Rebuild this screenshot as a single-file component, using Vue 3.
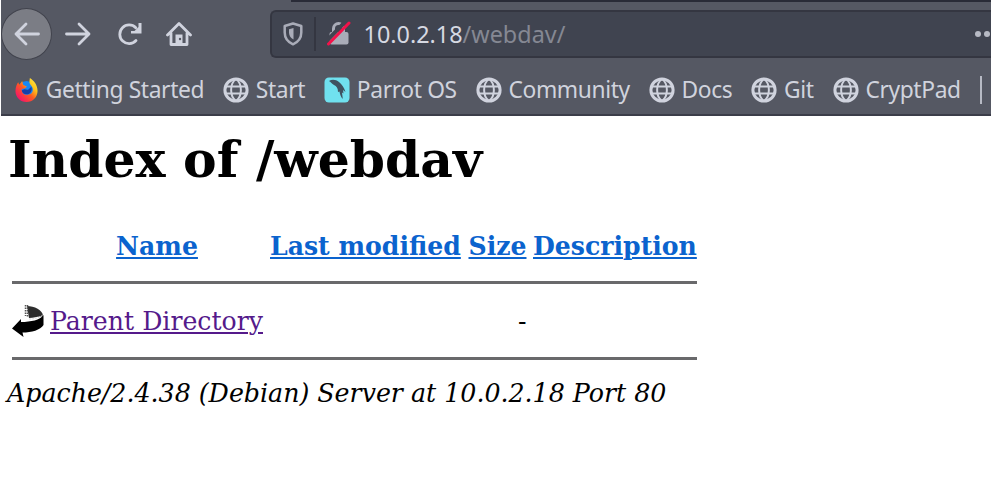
<script setup>
const bookmarks = [
  { label: 'Getting Started', icon: 'firefox' },
  { label: 'Start', icon: 'globe' },
  { label: 'Parrot OS', icon: 'parrot' },
  { label: 'Community', icon: 'globe' },
  { label: 'Docs', icon: 'globe' },
  { label: 'Git', icon: 'globe' },
  { label: 'CryptPad', icon: 'globe' },
]
</script>

<template>
  <div class="window">
    <header class="chrome">
      <div class="tabline"></div>
      <div class="toolbar">
        <button class="back" aria-label="Back">
          <svg width="26" height="24" viewBox="0 0 26 24"><path d="M24.500 12H2M12 2 2 12l10 10" /></svg>
        </button>
        <svg class="nav forward" width="26" height="24" viewBox="0 0 26 24"><path d="M1.500 12H24M14 2l10 10-10 10" /></svg>
        <svg class="nav reload" width="26" height="24" viewBox="0 0 26 24">
          <path d="M19 18.500A9.300 9.300 0 1 1 18.800 5.800" />
          <path class="fill" d="M24.500 1v10.500H14V9h3.500l4-4V1z" />
        </svg>
        <svg class="nav home" width="26" height="26" viewBox="0 0 26 26">
          <path d="M1.500 14 13 2.500 24.500 14M5 12v11.500h16V12" />
          <path class="fill" d="M9.500 13.500h7v10h-7z" />
          <circle cx="14" cy="18" r="1.200" fill="#555863" stroke="none" />
        </svg>
        <div class="urlbar">
          <svg class="shield" width="20" height="24" viewBox="0 0 20 24">
            <path d="M10 1.500 18.300 4v6.500c0 5.500-3 9.500-8.300 11.800C4.700 20 1.700 16 1.700 10.500V4z" />
            <path class="half" d="M10.500 6v11.500C7 15.500 6 13 6 10.500V7.200z" />
          </svg>
          <i class="divider"></i>
          <svg class="lock" width="24" height="26" viewBox="0 0 24 26">
            <path d="M6.500 12V7.500a5 5 0 0 1 10 0V12" fill="none" stroke="#a9acb8" stroke-width="3" />
            <rect x="2.500" y="11" width="19" height="12.500" rx="2" fill="#a9acb8" />
            <path d="M0 19.500 19 0" stroke="#404450" stroke-width="4" />
            <path d="M1.500 23 22 2" stroke="#f3124a" stroke-width="3" stroke-linecap="round" />
          </svg>
          <span class="url"><b>10.0.2.18</b>/webdav/</span>
          <span class="dots"><i></i><i></i></span>
        </div>
      </div>
      <nav class="bookmarks">
        <a v-for="b in bookmarks" :key="b.label" class="bookmark">
          <svg v-if="b.icon === 'firefox'" width="24" height="25" viewBox="0 0 25 26">
            <defs>
              <linearGradient id="fire" x1="1" y1="0" x2="0.150" y2="0.900">
                <stop offset="0" stop-color="#fff44f" /><stop offset="0.350" stop-color="#ffc21a" />
                <stop offset="0.600" stop-color="#ff5b20" /><stop offset="1" stop-color="#f5116b" />
              </linearGradient>
            </defs>
            <circle cx="12" cy="12" r="9" fill="#1687f5" />
            <path d="M15.500 0c4 2.500 8 7.200 8 13.300C23.500 20 18.500 25 12 25S.5 20 .5 13.500C.5 9.500 2 6.500 3.300 4.500L4.500 7 7.500 3l1 4 4 2-2.500 2-3 .5c0 4 2.200 6 5.500 6 4.500 0 6.500-3 6-6.500-.4-3-3.500-4-3.500-7.500z" fill="url(#fire)" />
            <path d="M9 12c2-.8 3 .8 5 0l3-3c1.500 4-1 8-5 8-3 0-4.500-2-5-4z" fill="#173fa8" />
          </svg>
          <svg v-else-if="b.icon === 'parrot'" width="26" height="26" viewBox="0 0 26 26">
            <rect x="0.500" y="0.500" width="25" height="25" rx="4.500" fill="#70e1ef" />
            <path d="M5 4c3-2 7-1.500 10 1 3 2.300 5 5.500 6.500 10l-2.500-2 .5 3.500-1.500-1 .8 6.500c-2.300-2.500-2.800-5-3.300-7.500l-1.500.5c0-4-1.500-6-4-7C8.500 7 7 5.500 5 4z" fill="#3f5260" />
          </svg>
          <svg v-else class="globe" width="26" height="26" viewBox="0 0 26 26">
            <circle cx="13" cy="13" r="11.100" />
            <path class="thin" d="M2.500 9.500h21M2.500 16.500h21M13 2C6.500 6.500 6.500 19.500 13 24M13 2c6.500 4.500 6.500 17.500 0 22" />
          </svg>
          <span>{{ b.label }}</span>
        </a>
        <i class="end"></i>
      </nav>
    </header>

    <main class="page">
      <h1>Index of /webdav</h1>
      <div class="listing">
        <div class="row head">
          <span class="name"><a>Name</a></span>
          <span><a>Last modified</a></span>
          <span><a>Size</a></span>
          <span><a>Description</a></span>
        </div>
        <hr />
        <div class="row entry">
          <span class="parent">
            <svg width="32" height="33" viewBox="0 0 32 33">
              <path d="M15 1c7 0 16 4 16 10l-.5 1C27 10.500 23 13 17 13z" fill="#2d2d2d" />
              <path d="M13.500 0v11M15.500 0v12" stroke="#555" stroke-width="1.500" stroke-dasharray="1.500 1" />
              <path d="M31.500 10v10c-3 5-12 7.500-21 7.500l1 4.500L0 23.500 9 14v3c10 0 19-2 22.500-7z" fill="#000" />
              <path d="M17 14c6 0 11-1.500 14-4" fill="none" stroke="#ddd" stroke-width="1" stroke-dasharray="2 1" />
            </svg>
            <a>Parent Directory</a>
          </span>
          <span></span>
          <span class="size">-</span>
          <span></span>
        </div>
        <hr />
      </div>
      <address>Apache/2.4.38 (Debian) Server at 10.0.2.18 Port 80</address>
    </main>
  </div>
</template>

<style>
body { margin: 0; background: #fff; }
</style>

<style scoped>
.window { width: 991px; height: 487px; overflow: hidden; background: #fff; }
svg { display: block; flex: none; }
.chrome {
  box-sizing: border-box; height: 116px; margin-left: 1px; overflow: hidden;
  background: #555863; border-bottom: 2px solid #3b3d49;
  font-family: "Noto Sans", sans-serif; color: #d0d3dd;
}
.tabline { height: 2px; margin-left: 290px; background: #292b37; }
.toolbar { display: flex; align-items: center; height: 64px; }
.back {
  display: flex; align-items: center; justify-content: center; box-sizing: border-box;
  width: 51px; height: 52px; padding: 0; border: 1px solid #41434d; border-radius: 50%;
  background: #7b7d85; flex: none;
}
.back svg, .nav { fill: none; stroke: #d0d3de; stroke-width: 2.800; stroke-linecap: round; stroke-linejoin: round; }
.nav .fill { fill: #d0d3de; stroke: none; }
.forward { margin-left: 13px; }
.reload { margin-left: 26px; }
.home { margin-left: 23px; }
.urlbar {
  display: flex; align-items: center; box-sizing: border-box; width: 730px; height: 48px;
  margin-left: 78px; flex: none; background: #404450; border: 2px solid #343641;
  border-right: 0; border-radius: 6px 0 0 6px;
}
.shield { margin-left: 11px; fill: none; stroke: #a9acb8; stroke-width: 2.500; stroke-linejoin: round; }
.shield .half { fill: #a9acb8; stroke: none; }
.divider { width: 2px; height: 34px; margin-left: 11px; background: #343641; }
.lock { margin-left: 11px; }
.url { margin-left: 12.500px; font-size: 23.400px; line-height: 32px; color: #858893; white-space: nowrap; }
.url b { font-weight: 400; color: #d6d9e2; }
.dots { display: flex; gap: 3px; margin-left: auto; margin-right: 10.500px; }
.dots i { width: 6px; height: 6px; border-radius: 50%; background: #b7bac4; }
.bookmarks {
  display: flex; align-items: center; gap: 18.900px; height: 48px; padding-left: 14px;
  font-size: 22.800px; letter-spacing: -0.370px; white-space: nowrap;
}
.bookmark { display: flex; align-items: center; gap: 6.800px; flex: none; }
.bookmark span { line-height: 30px; }
.globe { fill: none; stroke: #d0d3de; stroke-width: 3; }
.globe .thin { stroke-width: 2; }
.end { width: 2px; height: 28px; background: #b7bac4; flex: none; }

.page { padding-left: 8px; font-family: "DejaVu Serif", serif; font-size: 25.200px; color: #000; }
h1 { margin: 0; padding-top: 14px; font-size: 50.400px; line-height: 60px; font-weight: 700; white-space: nowrap; }
.listing { width: 685px; margin-left: 4px; padding-top: 39px; }
.row { display: grid; white-space: nowrap; }
.head { grid-template-columns: 258px 198.500px 64.500px 164px; height: 34px; line-height: 34px; font-weight: 700; font-size: 25.150px; color: #0b63ce; }
.name { text-align: center; margin-left: 32px; }
.row a { text-decoration: underline; text-decoration-thickness: 2px; text-underline-offset: 2px; }
hr { height: 3px; margin: 0; border: 0; background: #69696b; }
.head + hr { margin-top: 18px; }
.entry { grid-template-columns: 456.500px 0 58px 1fr; height: 34px; margin: 21px 0 18px; line-height: 34px; }
.parent { display: flex; gap: 6px; color: #551a8b; }
.size { text-align: right; }
address { margin-left: -1px; padding-top: 17px; font-size: 25.270px; font-style: italic; line-height: 34px; white-space: nowrap; }
</style>
